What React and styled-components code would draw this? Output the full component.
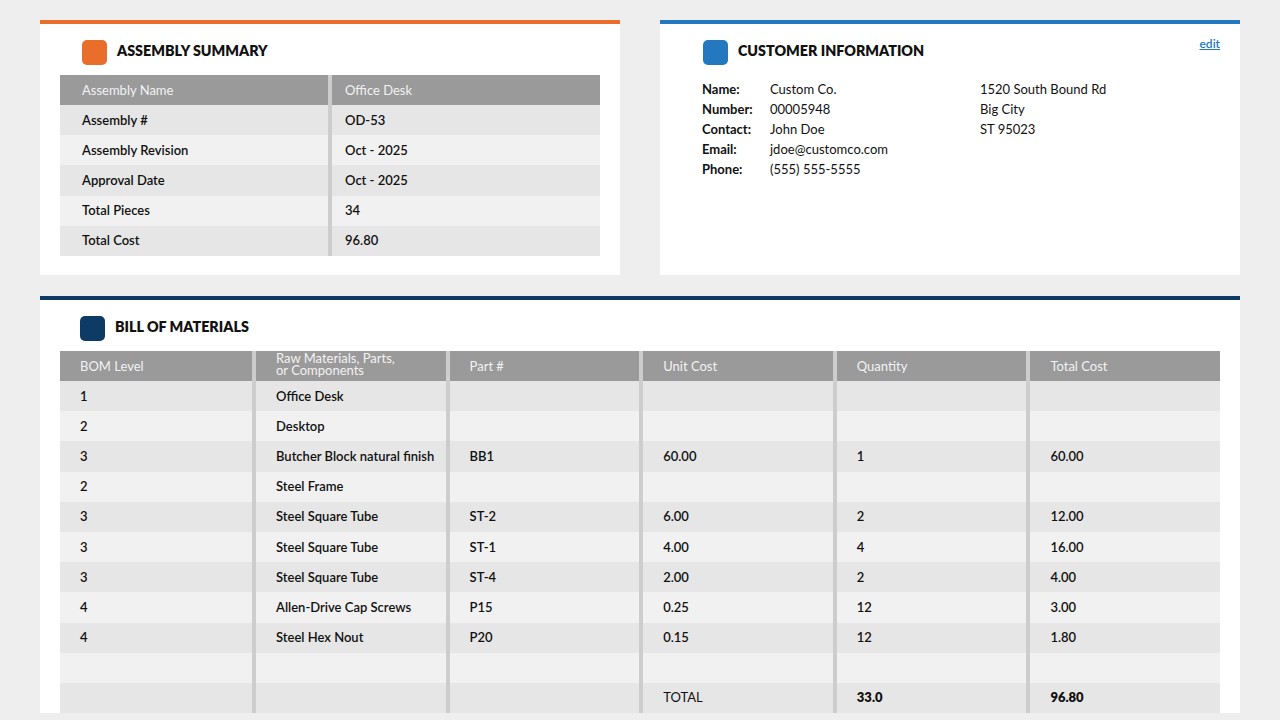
import styled, { createGlobalStyle } from "styled-components";

const GlobalStyle = createGlobalStyle`
    body {
        margin: 0;
        background: #eeeeee;
        font-family: Lato, "Noto Sans", sans-serif;
        color: #111;
    }
    * {
        box-sizing: border-box;
    }
`;

const summary = [
    ["Assembly #", "OD-53"],
    ["Assembly Revision", "Oct - 2025"],
    ["Approval Date", "Oct - 2025"],
    ["Total Pieces", "34"],
    ["Total Cost", "96.80"],
];

const customer = [
    ["Name:", "Custom Co.", "1520 South Bound Rd"],
    ["Number:", "00005948", "Big City"],
    ["Contact:", "John Doe", "ST 95023"],
    ["Email:", "jdoe@customco.com", ""],
    ["Phone:", "(555) 555-5555", ""],
];

const bomHeads = ["BOM Level", "Raw Materials, Parts,\nor Components", "Part #", "Unit Cost", "Quantity", "Total Cost"];

const bomRows = [
    ["1", "Office Desk", "", "", "", ""],
    ["2", "Desktop", "", "", "", ""],
    ["3", "Butcher Block natural finish", "BB1", "60.00", "1", "60.00"],
    ["2", "Steel Frame", "", "", "", ""],
    ["3", "Steel Square Tube", "ST-2", "6.00", "2", "12.00"],
    ["3", "Steel Square Tube", "ST-1", "4.00", "4", "16.00"],
    ["3", "Steel Square Tube", "ST-4", "2.00", "2", "4.00"],
    ["4", "Allen-Drive Cap Screws", "P15", "0.25", "12", "3.00"],
    ["4", "Steel Hex Nout", "P20", "0.15", "12", "1.80"],
    ["", "", "", "", "", ""],
];

const App = () => {
    return (
        <>
            <GlobalStyle />
            <Page>
                <TopRow>
                    <Card $accent="#e96d2b">
                        <CardHead $indent="22px">
                            <Badge $color="#e96d2b" />
                            <Title>ASSEMBLY SUMMARY</Title>
                        </CardHead>
                        <SummaryTable>
                            <SumRow $head>
                                <SumCell $head>Assembly Name</SumCell>
                                <SumCell $head $second>Office Desk</SumCell>
                            </SumRow>
                            {summary.map((row, idx) => (
                                <SumRow key={idx} $alt={idx % 2 === 1}>
                                    <SumCell>{row[0]}</SumCell>
                                    <SumCell $second>{row[1]}</SumCell>
                                </SumRow>
                            ))}
                        </SummaryTable>
                    </Card>

                    <Card $accent="#2378c0">
                        <CardHead $indent="23px">
                            <Badge $color="#2378c0" />
                            <Title>CUSTOMER INFORMATION</Title>
                            <EditLink href="#">edit</EditLink>
                        </CardHead>
                        <InfoGrid>
                            {customer.map((row, idx) => (
                                <InfoLine key={idx}>
                                    <InfoLabel>{row[0]}</InfoLabel>
                                    <InfoValue>{row[1]}</InfoValue>
                                    <InfoValue>{row[2]}</InfoValue>
                                </InfoLine>
                            ))}
                        </InfoGrid>
                    </Card>
                </TopRow>

                <Card $accent="#0e3a66" $wide>
                    <CardHead $indent="20px">
                        <Badge $color="#0e3a66" />
                        <Title>BILL OF MATERIALS</Title>
                    </CardHead>
                    <BomTable>
                        <BomRow $head>
                            {bomHeads.map((h, i) => (
                                <BomCell key={i} $head $first={i === 0} $wrap={h.includes("\n")}>
                                    {h}
                                </BomCell>
                            ))}
                        </BomRow>
                        {bomRows.map((row, idx) => (
                            <BomRow key={idx} $alt={idx % 2 === 1}>
                                {row.map((c, i) => (
                                    <BomCell key={i} $first={i === 0}>
                                        {c}
                                    </BomCell>
                                ))}
                            </BomRow>
                        ))}
                        <BomRow>
                            <BomCell $first />
                            <BomCell />
                            <BomCell />
                            <BomCell $plain>TOTAL</BomCell>
                            <BomCell $bold>33.0</BomCell>
                            <BomCell $bold>96.80</BomCell>
                        </BomRow>
                    </BomTable>
                </Card>
            </Page>
        </>
    );
};

export default App;

const Page = styled.div`
    padding: 20px 40px 0;
    display: flex;
    flex-direction: column;
    gap: 21px;
`;

const TopRow = styled.div`
    display: grid;
    grid-template-columns: 1fr 1fr;
    gap: 40px;
`;

const Card = styled.section`
    background: #fff;
    border-top: 4px solid ${(p) => p.$accent};
    padding: 16px 20px ${(p) => (p.$wide ? "0" : "19px")};
    height: ${(p) => (p.$wide ? "auto" : "255px")};
`;

const CardHead = styled.div`
    position: relative;
    display: flex;
    align-items: center;
    gap: 10px;
    padding-left: ${(p) => p.$indent};
    height: 25px;
    margin-bottom: 10px;
`;

const Badge = styled.span`
    width: 25px;
    height: 25px;
    border-radius: 5px;
    background: ${(p) => p.$color};
    flex-shrink: 0;
`;

const Title = styled.h2`
    margin: 0;
    padding-bottom: 5px;
    font-size: 14.3px;
    font-weight: 800;
    color: #111;
`;

const EditLink = styled.a`
    position: absolute;
    right: 0;
    top: -4px;
    font-size: 12px;
    font-weight: 600;
    color: #2378c0;
    text-decoration: underline;
`;

const SummaryTable = styled.div`
    display: flex;
    flex-direction: column;
`;

const SumRow = styled.div`
    display: grid;
    grid-template-columns: 268px 1fr;
    height: ${(p) => (p.$head ? "30px" : "30.2px")};
    background: ${(p) => (p.$head ? "#9a9a9a" : p.$alt ? "#f1f1f1" : "#e6e6e6")};
`;

const SumCell = styled.div`
    display: flex;
    align-items: center;
    padding-left: ${(p) => (p.$second ? "13px" : "22px")};
    padding-bottom: 1px;
    border-left: ${(p) => (p.$second ? "4px solid #cdcdcd" : "none")};
    font-size: 13px;
    font-weight: ${(p) => (p.$head ? 400 : 600)};
    color: ${(p) => (p.$head ? "#f2f2f2" : "#111")};
`;

const InfoGrid = styled.div`
    padding: 4px 0 0 22px;
    display: flex;
    flex-direction: column;
`;

const InfoLine = styled.div`
    display: grid;
    grid-template-columns: 68px 210px 1fr;
    height: 20px;
    align-items: center;
    font-size: 13px;
`;

const InfoLabel = styled.span`
    font-weight: 700;
`;

const InfoValue = styled.span`
    font-weight: 400;
`;

const BomTable = styled.div`
    display: flex;
    flex-direction: column;
`;

const BomRow = styled.div`
    display: grid;
    grid-template-columns: 192px repeat(5, 1fr);
    height: ${(p) => (p.$head ? "30px" : "30.2px")};
    background: ${(p) => (p.$head ? "#9a9a9a" : p.$alt ? "#f1f1f1" : "#e6e6e6")};
`;

const BomCell = styled.div`
    display: flex;
    align-items: ${(p) => (p.$wrap ? "flex-start" : "center")};
    padding-left: 20px;
    padding-top: ${(p) => (p.$wrap ? "1px" : "0")};
    padding-bottom: ${(p) => (p.$wrap ? "0" : "1px")};
    border-left: ${(p) => (p.$first ? "none" : "4px solid #cdcdcd")};
    white-space: pre-line;
    line-height: ${(p) => (p.$wrap ? "12px" : "normal")};
    font-size: 13px;
    font-weight: ${(p) => (p.$head || p.$plain ? 400 : p.$bold ? 800 : 600)};
    color: ${(p) => (p.$head ? "#f2f2f2" : "#111")};
`;
